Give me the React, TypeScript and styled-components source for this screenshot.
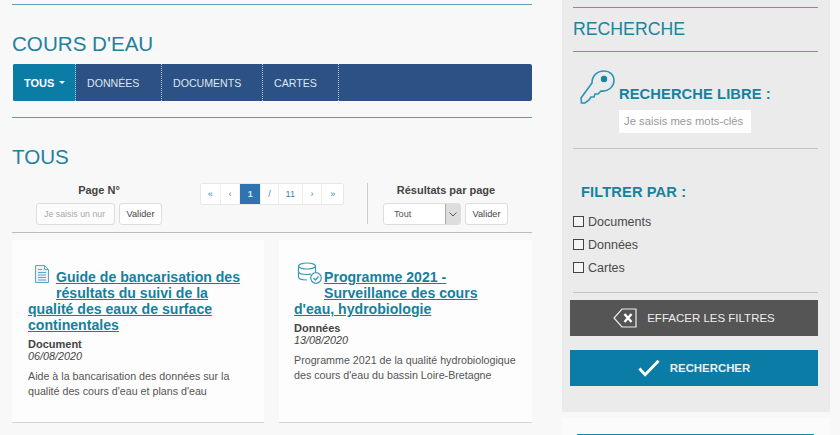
import React from 'react'
import styled, { createGlobalStyle } from 'styled-components'

const Global = createGlobalStyle`
  html, body { margin: 0; padding: 0; }
  body {
    width: 840px;
    height: 435px;
    overflow: hidden;
    background: #f8f8f8;
    font-family: "Liberation Sans", Arial, sans-serif;
    color: #444;
  }
`

const Page = styled.div`
  display: flex;
  width: 840px;
  height: 435px;
  overflow: hidden;
`

const Main = styled.div`
  width: 520px;
  margin-left: 12px;
  padding-top: 4px;
  flex: none;
`

const Rule = styled.div<{ $color?: string }>`
  height: 1px;
  background: ${p => p.$color || '#5a9fb5'};
`

const Title = styled.h2`
  margin: 0;
  font-size: 20.6px;
  line-height: 24px;
  font-weight: 400;
  color: #23809f;
`

const PageTitle = styled(Title)`
  padding-top: 27px;
  height: 32px;
`

const Nav = styled.div`
  display: flex;
  height: 37px;
  margin-left: 1px;
  background: #2c5185;
  border-radius: 2px;
  overflow: hidden;
`

const NavItem = styled.div<{ $active?: boolean; $w: number }>`
  width: ${p => p.$w}px;
  display: flex;
  align-items: center;
  padding-left: 11px;
  font-size: ${p => (p.$active ? '11px' : '10.6px')};
  color: ${p => (p.$active ? '#fff' : '#dfe6ef')};
  font-weight: ${p => (p.$active ? 700 : 400)};
  background: ${p => (p.$active ? '#0a7ca6' : 'transparent')};
  border-right: 1px dotted #b8c6d8;
  box-sizing: border-box;
`

const Caret = styled.span`
  display: inline-block;
  margin-left: 5px;
  width: 0;
  height: 0;
  border-left: 3px solid transparent;
  border-right: 3px solid transparent;
  border-top: 3px solid #fff;
`

const SubRule = styled(Rule)`
  margin-top: 16px;
`

const SubTitle = styled(Title)`
  padding-top: 27px;
`

const Controls = styled.div`
  display: flex;
  height: 42px;
  padding-top: 14px;
`

const PageBlock = styled.div`
  width: 188px;
  padding: 0 38px 0 24px;
  box-sizing: border-box;
`

const ControlLabel = styled.div`
  font-size: 11px;
  font-weight: 700;
  line-height: 14px;
  height: 20px;
  text-align: center;
  color: #444;
`

const ControlRow = styled.div`
  display: flex;
  gap: 4px;
`

const FakeInput = styled.div`
  width: 79px;
  height: 22px;
  background: #fcfcfc;
  border: 1px solid #ddd;
  border-radius: 3px;
  box-sizing: border-box;
  font-size: 8.8px;
  line-height: 20px;
  color: #aaa;
  padding-left: 7px;
  overflow: hidden;
  white-space: nowrap;
`

const Btn = styled.div`
  width: 43px;
  height: 22px;
  background: #fff;
  border: 1px solid #ddd;
  border-radius: 3px;
  box-sizing: border-box;
  font-size: 9.2px;
  line-height: 20px;
  text-align: center;
  color: #444;
`

const Pager = styled.div`
  display: flex;
  align-self: flex-start;
  height: 22px;
  background: #fff;
  border: 1px solid #e8e8e8;
  border-radius: 2px;
  width: 144px;
  box-sizing: border-box;
`

const PagerItem = styled.div<{ $active?: boolean; $w: number }>`
  width: ${p => p.$w}px;
  font-size: 9px;
  line-height: 20px;
  text-align: center;
  color: ${p => (p.$active ? '#d5e3f0' : '#3a86ad')};
  font-weight: ${p => (p.$active ? 700 : 400)};
  background: ${p => (p.$active ? '#2f74b0' : 'transparent')};
  border-right: 1px solid #eee;
  box-sizing: border-box;
  &:last-child { border-right: none; }
`

const Divider = styled.div`
  width: 1px;
  height: 41px;
  margin: 0 15px 0 23px;
  background: #ccc;
`

const ResultBlock = styled.div`
  width: 126px;
`

const SelectBox = styled.div`
  width: 78px;
  height: 22px;
  display: flex;
  background: #fff;
  border: 1px solid #ddd;
  border-radius: 3px;
  box-sizing: border-box;
  font-size: 9.2px;
  line-height: 20px;
  color: #555;
  padding-left: 10px;
  justify-content: space-between;
`

const SelectArrow = styled.div`
  width: 14px;
  background: #ddd;
  border-left: 1px solid #aaa;
  display: flex;
  align-items: center;
  justify-content: center;
`

const ListRule = styled(Rule)`
  margin-top: 7px;
`

const Cards = styled.div`
  display: flex;
  justify-content: space-between;
  margin-top: 7px;
`

const Card = styled.div<{ $w: number; $left: number }>`
  width: ${p => p.$w}px;
  height: 183px;
  box-sizing: border-box;
  background: #fdfdfd;
  border-bottom: 1px solid #d5d5d5;
  padding: 29px 15px 0 ${p => p.$left}px;
`

const CardTitle = styled.a`
  font-size: 14.1px;
  line-height: 16px;
  font-weight: 700;
  color: #177f9e;
  text-decoration: underline;
`

const TitleBlock = styled.div`
  line-height: 16px;
`

const DocFloat = styled.svg`
  float: left;
  margin: -4px 7px 4px 7px;
`

const DataFloat = styled.svg`
  float: left;
  margin: -7px 2px 4px 3px;
`

const Kind = styled.div`
  font-size: 11px;
  line-height: 11px;
  font-weight: 700;
  color: #444;
  margin-top: 6px;
`

const DateText = styled.div`
  font-size: 10.8px;
  line-height: 12px;
  font-style: italic;
  color: #444;
`

const Desc = styled.p`
  margin: 7px 0 0;
  font-size: 10.7px;
  line-height: 15px;
  color: #555;
`

const Side = styled.div`
  width: 268px;
  margin-left: 30px;
  flex: none;
`

const Panel = styled.div`
  height: 412px;
  background: #ebebeb;
  padding: 7px 12px 0 11px;
  box-sizing: border-box;
`

const PanelTitle = styled.div`
  font-size: 17.7px;
  line-height: 22px;
  color: #23809f;
  padding: 10px 0 11px;
`

const FreeSearch = styled.div`
  display: flex;
  align-items: flex-end;
  margin: 18px 0 0 7px;
`

const KeySvg = styled.svg`
  flex: none;
`

const Label = styled.div`
  font-size: 14.7px;
  font-weight: 700;
  line-height: 17px;
  color: #16829f;
  letter-spacing: 0.1px;
`

const FreeLabel = styled(Label)`
  margin: 0 0 2px 4px;
`

const SearchInput = styled.div`
  width: 132px;
  height: 23px;
  margin: 5px 0 15px 46px;
  background: #fff;
  font-size: 11.3px;
  line-height: 23px;
  padding: 0 5px;
  box-sizing: border-box;
  color: #999;
  overflow: hidden;
  white-space: nowrap;
`

const FilterLabel = styled(Label)`
  margin: 35px 0 9px 8px;
`

const CheckRow = styled.div`
  display: flex;
  align-items: center;
  gap: 4px;
  height: 23px;
  font-size: 12.5px;
  color: #4a4a4a;
`

const CheckBox = styled.span`
  width: 9px;
  height: 9px;
  border: 1px solid #444;
  background: #f5f5f5;
  flex: none;
`

const FilterRule = styled(Rule)`
  margin-top: 13px;
`

const ActionBtn = styled.div<{ $bg: string; $bold?: boolean }>`
  display: flex;
  align-items: center;
  justify-content: center;
  height: 36px;
  width: 248px;
  margin: ${p => (p.$bold ? '14px' : '7px')} 0 0 -3px;
  background: ${p => p.$bg};
  color: #eee;
  font-size: ${p => (p.$bold ? '11.400px' : '11.500px')};
  font-weight: ${p => (p.$bold ? 700 : 400)};
  gap: 10px;
`

const NextPanel = styled.div`
  margin-top: 6px;
  height: 40px;
  background: #fbfbfb;
  padding: 16px 16px 0 15px;
  box-sizing: border-box;
`

function DocIcon() {
  return (
    <DocFloat width="14" height="18" viewBox="0 0 14 18" fill="none" stroke="#5aaac4" strokeWidth="1">
      <path d="M.5.500h9l4 4v13H.5z" fill="#e6f2f6" />
      <path d="M9.500.500v4h4M3 4.500h4M3 7.500h8M3 10h8M3 12.500h8M3 15h8" />
    </DocFloat>
  )
}

function DataIcon() {
  return (
    <DataFloat width="25" height="22" viewBox="0 0 25 22" fill="none" stroke="#3d97b4" strokeWidth="1.200">
      <ellipse cx="10" cy="4" rx="8.500" ry="3" />
      <path d="M1.500 4v11c0 1.700 3.500 3 8.500 3M18.500 4v6M1.500 9.500c0 1.700 3.500 3 8.500 3 1.500 0 3-.1 4-.5" />
      <circle cx="19" cy="16" r="5.300" fill="#f6fafb" />
      <path d="M16.500 16l2 2 3-3.500" />
    </DataFloat>
  )
}

function KeyIcon() {
  return (
    <KeySvg width="35" height="35" viewBox="0 0 35 35" fill="none" stroke="#2b93b5" strokeWidth="1.600">
      <path d="M12 13c0-7 5-12 12-12 6 0 10 4 10 9 0 7-6 12-13 11l-3 3h-3l-1 3h-3l-2 3-4 3H1.500L1 28z" />
      <circle cx="24" cy="9" r="3.200" fill="#14859f" stroke="none" />
    </KeySvg>
  )
}

function ClearIcon() {
  return (
    <svg width="24" height="20" viewBox="0 0 24 20" fill="none">
      <path d="M23 1H9L1 10l8 9h14z" stroke="#eee" strokeWidth="1.200" />
      <path d="M11.500 6l7 8M18.500 6l-7 8" stroke="#fff" strokeWidth="2.400" />
    </svg>
  )
}

function CheckIcon() {
  return (
    <svg width="22" height="18" viewBox="0 0 23 18" fill="none">
      <path d="M1.500 9.500l6 6.500L21.500 1.500" stroke="#fff" strokeWidth="3" />
    </svg>
  )
}

export default function App() {
  return (
    <Page>
      <Global />
      <Main>
        <Rule />
        <PageTitle>COURS D'EAU</PageTitle>
        <Nav>
          <NavItem $active $w={63}>TOUS<Caret /></NavItem>
          <NavItem $w={86}>DONNÉES</NavItem>
          <NavItem $w={101}>DOCUMENTS</NavItem>
          <NavItem $w={76}>CARTES</NavItem>
        </Nav>
        <SubRule />
        <SubTitle>TOUS</SubTitle>
        <Controls>
          <PageBlock>
            <ControlLabel>Page N°</ControlLabel>
            <ControlRow>
              <FakeInput>Je saisis un nur</FakeInput>
              <Btn>Valider</Btn>
            </ControlRow>
          </PageBlock>
          <Pager>
            <PagerItem $w={20}>«</PagerItem>
            <PagerItem $w={20}>‹</PagerItem>
            <PagerItem $active $w={21}>1</PagerItem>
            <PagerItem $w={18}>/</PagerItem>
            <PagerItem $w={24}>11</PagerItem>
            <PagerItem $w={20}>›</PagerItem>
            <PagerItem $w={21}>»</PagerItem>
          </Pager>
          <Divider />
          <ResultBlock>
            <ControlLabel>Résultats par page</ControlLabel>
            <ControlRow>
              <SelectBox>
                Tout
                <SelectArrow>
                  <svg width="8" height="5" viewBox="0 0 8 5" fill="none">
                    <path d="M.5.500L4 4 7.500.500" stroke="#555" />
                  </svg>
                </SelectArrow>
              </SelectBox>
              <Btn>Valider</Btn>
            </ControlRow>
          </ResultBlock>
        </Controls>
        <ListRule $color="#bbb" />
        <Cards>
          <Card $w={252} $left={16}>
            <TitleBlock>
              <DocIcon />
              <CardTitle>Guide de bancarisation des résultats du suivi de la qualité des eaux de surface continentales</CardTitle>
            </TitleBlock>
            <Kind>Document</Kind>
            <DateText>06/08/2020</DateText>
            <Desc>Aide à la bancarisation des données sur la qualité des cours d'eau et plans d'eau</Desc>
          </Card>
          <Card $w={253} $left={15}>
            <TitleBlock>
              <DataIcon />
              <CardTitle>Programme 2021 - Surveillance des cours d'eau, hydrobiologie</CardTitle>
            </TitleBlock>
            <Kind>Données</Kind>
            <DateText>13/08/2020</DateText>
            <Desc>Programme 2021 de la qualité hydrobiologique des cours d'eau du bassin Loire-Bretagne</Desc>
          </Card>
        </Cards>
      </Main>
      <Side>
        <Panel>
          <Rule />
          <PanelTitle>RECHERCHE</PanelTitle>
          <Rule />
          <FreeSearch>
            <KeyIcon />
            <FreeLabel>RECHERCHE LIBRE :</FreeLabel>
          </FreeSearch>
          <SearchInput>Je saisis mes mots-clés</SearchInput>
          <Rule $color="#c4c4c4" />
          <FilterLabel>FILTRER PAR :</FilterLabel>
          <CheckRow><CheckBox />Documents</CheckRow>
          <CheckRow><CheckBox />Données</CheckRow>
          <CheckRow><CheckBox />Cartes</CheckRow>
          <FilterRule $color="#c4c4c4" />
          <ActionBtn $bg="#555">
            <ClearIcon />
            EFFACER LES FILTRES
          </ActionBtn>
          <ActionBtn $bg="#0a7ca6" $bold>
            <CheckIcon />
            RECHERCHER
          </ActionBtn>
        </Panel>
        <NextPanel>
          <Rule $color="#1b86a6" />
        </NextPanel>
      </Side>
    </Page>
  )
}
